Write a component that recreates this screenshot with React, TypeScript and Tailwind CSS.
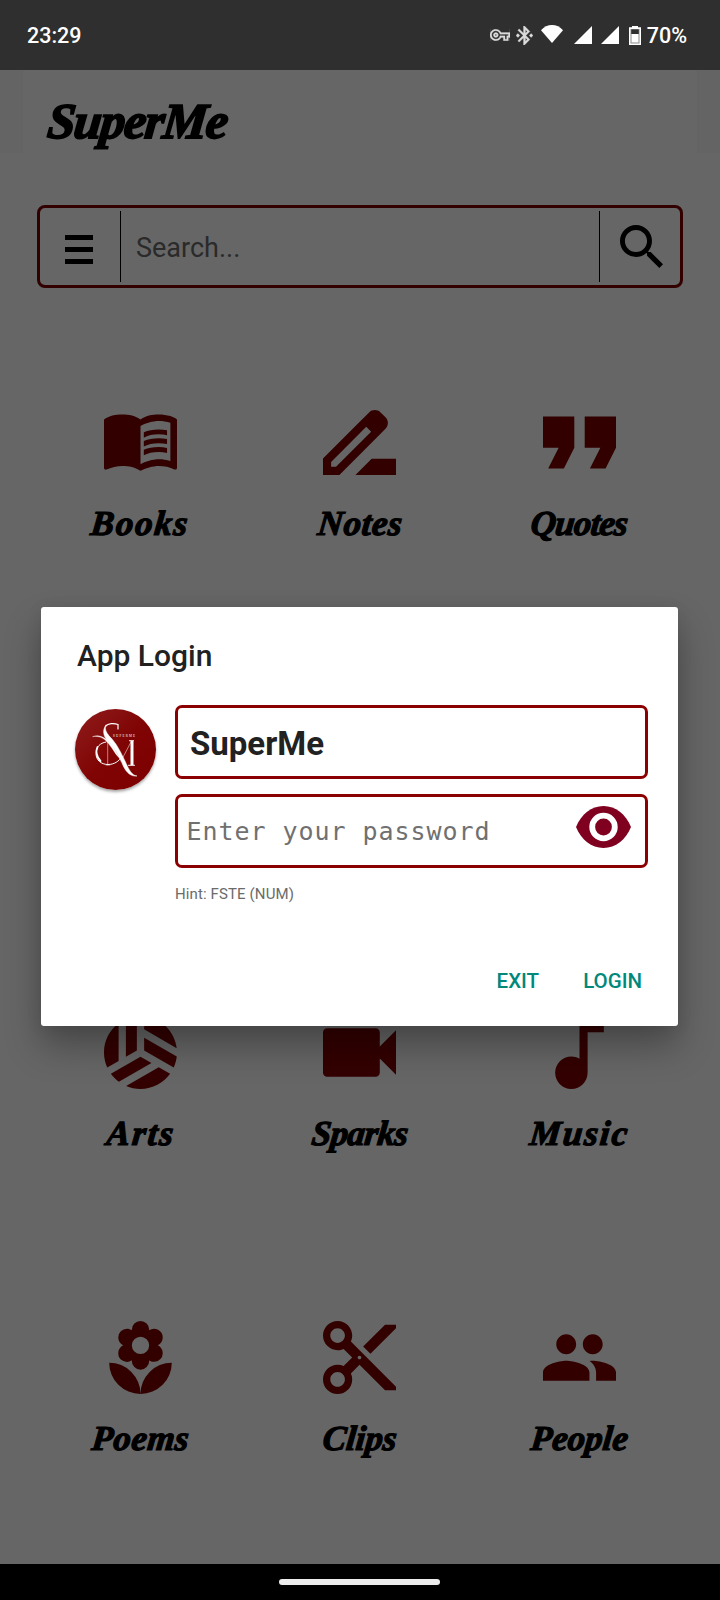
import type { IconType } from "react-icons";
import {
  MdBluetoothConnected,
  MdContentCut,
  MdDriveFileRenameOutline,
  MdFormatQuote,
  MdLocalFlorist,
  MdMenuBook,
  MdMusicNote,
  MdOutlineVpnKey,
  MdPeople,
  MdSearch,
  MdSportsVolleyball,
  MdVideocam,
} from "react-icons/md";

type Tile = { label: string; icon: IconType; box: string; spacing: string };

const topRow: Tile[] = [
  { label: "Books", icon: MdMenuBook, box: "1 1.95 22 22", spacing: "tracking-[1.8px]" },
  { label: "Notes", icon: MdDriveFileRenameOutline, box: "3 3 18 18", spacing: "tracking-[0.6px]" },
  { label: "Quotes", icon: MdFormatQuote, box: "5 5 14 14", spacing: "tracking-[-0.8px]" },
];

const thirdRow: Tile[] = [
  { label: "Arts", icon: MdSportsVolleyball, box: "2 2 20 20", spacing: "tracking-[2px]" },
  { label: "Sparks", icon: MdVideocam, box: "3 3 18 18", spacing: "tracking-[-0.6px]" },
  { label: "Music", icon: MdMusicNote, box: "3 3 18 18", spacing: "tracking-[2px]" },
];

const bottomRow: Tile[] = [
  { label: "Poems", icon: MdLocalFlorist, box: "1.5 1 21 21", spacing: "tracking-[0.4px]" },
  { label: "Clips", icon: MdContentCut, box: "2 2 20 20", spacing: "tracking-[0px]" },
  { label: "People", icon: MdPeople, box: "1 1 22 22", spacing: "tracking-[0px]" },
];

function StatusBar() {
  return (
    <div className="flex h-[70px] shrink-0 items-center bg-[#2f2f2f] pl-[27px] pr-[33px] text-[21.5px] font-medium text-white">
      <span className="pt-[2px]">23:29</span>
      <div className="ml-auto flex items-center">
        <MdOutlineVpnKey
          viewBox="0 5 24 14"
          className="h-[12px] w-[20px] stroke-current stroke-[0.3px] text-[#dcdcdc]"
        />
        <MdBluetoothConnected
          viewBox="3 2 18 20"
          className="ml-[6px] h-[19px] w-[17px] stroke-current stroke-[0.4px] text-[#dcdcdc]"
        />
        <svg viewBox="0 0 22 18" className="ml-[8px] h-[18px] w-[22px] -translate-y-px" fill="currentColor">
          <path d="M11 18 0 5.200C3 1.900 6.800 0 11 0s8 1.900 11 5.200z" />
        </svg>
        <svg viewBox="0 0 18 18" className="ml-[11px] h-[18px] w-[18px]" fill="currentColor">
          <path d="M18 0v18H0z" />
        </svg>
        <svg viewBox="0 0 18 18" className="ml-[9px] h-[18px] w-[18px]" fill="currentColor">
          <path d="M18 0v18H0z" />
        </svg>
        <svg viewBox="0 0 12 19" className="ml-[10px] h-[19px] w-[12px]">
          <path d="M3 0h6v1.200h3V19H0V1.200h3z" fill="#fff" />
          <path d="M1.500 3h9v14.500h-9z" fill="#8a8a8a" />
          <path d="M2.300 3.500h7.400V8H2.300z" fill="#2f2f2f" />
          <path d="M2.500 8h7v8.500h-7z" fill="#fff" />
        </svg>
        <span className="ml-[6px] pt-[2px]">70%</span>
      </div>
    </div>
  );
}

function SearchBar() {
  return (
    <div className="mx-[37px] mt-[52px] flex h-[83px] shrink-0 items-center rounded-[8px] border-[3px] border-[#330000]">
      <div className="flex w-[80px] flex-col gap-[7px] pt-[5px] pl-[25px]">
        <span className="h-[5px] w-[28px] bg-black" />
        <span className="h-[5px] w-[28px] bg-black" />
        <span className="h-[5px] w-[28px] bg-black" />
      </div>
      <div className="flex h-[71px] flex-1 items-center border-x border-black pt-[3px] pl-[15px] text-[27px] text-[#2a2a2a]">
        Search...
      </div>
      <div className="flex w-[80px] justify-center pl-[2px]">
        <MdSearch viewBox="3 3 17.49 17.49" className="mt-[-1px] h-[43px] w-[43px] text-black" />
      </div>
    </div>
  );
}

function TileRow({ tiles }: { tiles: Tile[] }) {
  return (
    <div className="grid h-[305px] grid-cols-3">
      {tiles.map(({ label, icon: Icon, box, spacing }) => (
        <div key={label} className="flex flex-col items-center">
          <Icon viewBox={box} className="h-[73px] w-[73px] text-[#330000]" />
          <span
            className={`mt-[24px] -skew-x-6 font-['Liberation_Serif',serif] text-[35px] leading-[41px] font-bold text-black italic [-webkit-text-stroke:1.2px_black] ${spacing}`}
          >
            {label}
          </span>
        </div>
      ))}
    </div>
  );
}

function Avatar() {
  return (
    <div className="mt-[4px] h-[81px] w-[81px] shrink-0 rounded-full bg-linear-to-br from-[#8f1b1b] via-[#800404] to-[#7c0000] shadow-[0_2px_3px_rgba(0,0,0,0.35)]">
      <svg viewBox="0 0 81 81" className="h-full w-full" fill="none" stroke="#fff" strokeLinecap="round">
        <path d="M43 20v-4.500c-4-1.500-10-1.500-12.500 2" strokeWidth="1.200" />
        <path
          d="M31 16c-2 5 1 9 6 14 6 7 9 14 13 22 4 9 7 14.500 12 15-7 1-12-5-15-13-4-9-8-16-13-21-6-5-7-12-3-17z"
          fill="#fff"
          strokeWidth="0.500"
        />
        <path
          d="M18 27.500c8-3 15 3 20 10 3 5 5 9 8 13-5-4-7-9-11-14-5-7-10-10-17-9z"
          fill="#fff"
          strokeWidth="0.400"
        />
        <path d="M31 33c-6 1-10 5-10 11.500C21 51 26 55.500 33 55.500c6 0 11-3 14-8" strokeWidth="1" />
        <path d="M22.500 38c-2 4-1 10 3 14" strokeWidth="1.800" />
        <path d="M32.700 32v24M31 56h4M56 33 46 52" strokeWidth="0.500" />
        <path d="M57 32v24" strokeWidth="3" strokeLinecap="butt" />
        <path d="M53.500 56.300h6M54.500 31.700h4" strokeWidth="1" />
        <text
          x="38"
          y="28.300"
          textLength="22"
          fill="#fff"
          stroke="none"
          fontSize="3.200"
          fontFamily="Liberation Serif, serif"
        >
          SUPERME
        </text>
      </svg>
    </div>
  );
}

function LoginDialog() {
  return (
    <div className="absolute top-[607px] left-[41px] flex h-[419px] w-[637px] flex-col rounded-[3px] bg-white pr-[30px] pl-[34px] shadow-[0_20px_36px_rgba(0,0,0,0.3),0_2px_16px_rgba(0,0,0,0.08)]">
      <h1 className="mt-[31px] pl-[2px] text-[30px] leading-[36px] font-medium text-[#212121]">App Login</h1>
      <div className="mt-[31px] flex">
        <Avatar />
        <div className="ml-[19px] flex flex-1 flex-col">
          <div className="flex h-[74px] items-center rounded-[7px] border-[3px] border-[#8b0000] pt-[2px] pl-[12px] text-[33px] leading-none font-bold text-[#212121]">
            SuperMe
          </div>
          <div className="mt-[15px] flex h-[74px] items-center justify-between rounded-[7px] border-[3px] border-[#8b0000] pr-[14px] pl-[8.500px]">
            <span className="pt-[2px] font-['DejaVu_Sans_Mono',monospace] text-[25px] tracking-[0.950px] text-[#707070]">
              Enter your password
            </span>
            <svg viewBox="0 0 55 42" className="mt-[-8px] h-[42px] w-[55px]">
              <path
                d="M0 21C5 8.500 15.500 0 27.500 0S50 8.500 55 21C50 33.500 39.500 42 27.500 42S5 33.500 0 21z"
                fill="#7f001f"
              />
              <circle cx="27.500" cy="21" r="14.200" fill="#fff" />
              <circle cx="27.500" cy="21" r="8.400" fill="#7f001f" />
            </svg>
          </div>
          <p className="mt-[16px] text-[15px] leading-[20px] tracking-[0.120px] text-[#6b6b6b]">Hint: FSTE (NUM)</p>
        </div>
      </div>
      <div className="mt-[64px] flex justify-end gap-[44px] pr-[6px] text-[20.500px] leading-[26px] font-medium text-[#00897b]">
        <span>EXIT</span>
        <span>LOGIN</span>
      </div>
    </div>
  );
}

export default function App() {
  return (
    <div className="relative flex h-[1600px] w-[720px] flex-col overflow-hidden bg-[#666666] font-[Roboto,sans-serif]">
      <StatusBar />
      <header className="h-[83px] shrink-0 border-x-[23px] border-[#646464] pl-[25px]">
        <span className="inline-block -skew-x-6 font-['Liberation_Serif',serif] text-[50px] leading-[102px] font-bold tracking-[-1.400px] text-black italic [-webkit-text-stroke:1.8px_black]">
          SuperMe
        </span>
      </header>
      <SearchBar />
      <main className="shrink-0 px-[31px] pt-[117.500px]">
        <TileRow tiles={topRow} />
        <div className="h-[305px]" />
        <TileRow tiles={thirdRow} />
        <TileRow tiles={bottomRow} />
      </main>
      <nav className="absolute inset-x-0 bottom-0 flex h-[36px] bg-black pt-[15px] pl-[279px]">
        <span className="h-[6px] w-[161px] rounded-full bg-[#ececec]" />
      </nav>
      <LoginDialog />
    </div>
  );
}
